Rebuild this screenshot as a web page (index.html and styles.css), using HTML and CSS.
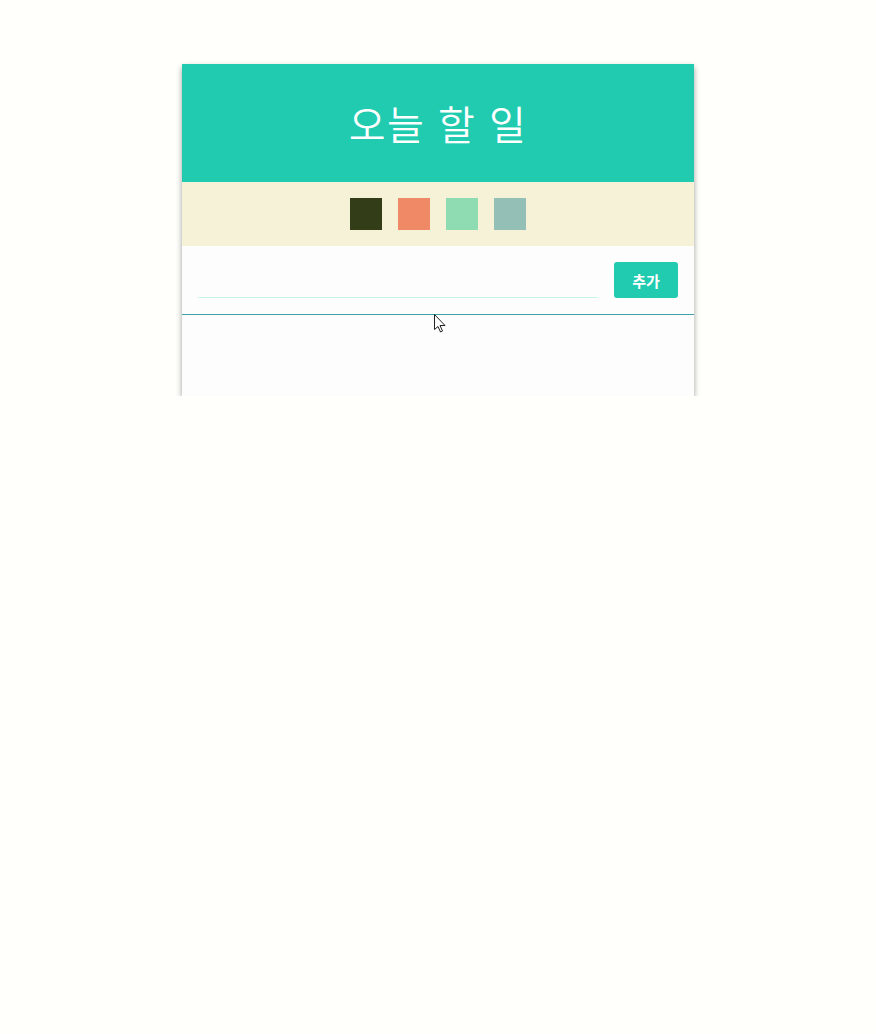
FILE: index.html
```html
<!DOCTYPE html>
<html lang="ko">
<head>
<meta charset="utf-8">
<title>오늘 할 일</title>
<link rel="stylesheet" href="styles.css">
</head>
<body>
<main class="template">
  <div class="title">오늘 할 일</div>
  <section class="palette">
    <div class="color c1"></div>
    <div class="color c2"></div>
    <div class="color c3"></div>
    <div class="color c4"></div>
  </section>
  <section class="form-wrapper">
    <div class="form">
      <input type="text" class="todo-input">
      <div class="create-button">추가</div>
    </div>
  </section>
  <section class="todos-wrapper">
    <svg class="cursor" width="13" height="19" viewBox="0 0 13 19"><path d="M0.5 0.5 L0.5 15.5 L4 12.5 L6.5 18 L8.5 17 L6 11.5 L11 11.5 Z" fill="#fff" stroke="#222" stroke-width="1"/></svg>
  </section>
</main>
</body>
</html>
```
FILE: styles.css
```css
html, body {
  margin: 0;
  padding: 0;
  background: #fffffc;
  font-family: "Noto Sans CJK KR", "Noto Sans", sans-serif;
}
.template {
  width: 512px;
  margin: 64px auto 0;
  background: #fdfdfd;
  box-shadow: 0 3px 6px rgba(0,0,0,0.16), 0 3px 6px rgba(0,0,0,0.23);
}
.title {
  height: 118px;
  background: #20cbb0;
  color: #fff;
  font-size: 40px;
  font-weight: 350;
  line-height: 118px;
  text-align: center;
  letter-spacing: 1.5px;
}
.palette {
  height: 64px;
  background: #f6f2d8;
  display: flex;
  justify-content: center;
  align-items: center;
  gap: 16px;
}
.color {
  width: 32px;
  height: 32px;
}
.c1 { background: #333d17; }
.c2 { background: #f08a66; }
.c3 { background: #90dcb2; }
.c4 { background: #94bfb6; }
.form-wrapper {
  padding: 16px;
  border-bottom: 1px solid #3aa3a6;
  background: #fdfdfd;
}
.form {
  display: flex;
  height: 36px;
}
.todo-input {
  flex: 1;
  min-width: 0;
  font-size: 20px;
  border: none;
  outline: none;
  background: transparent;
  border-bottom: 1px solid #c8f6e4;
  padding: 0;
  margin: 0;
  height: 36px;
  box-sizing: border-box;
}
.create-button {
  margin-left: 16px;
  width: 64px;
  height: 36px;
  box-sizing: border-box;
  background: #20cbb0;
  border-radius: 3px;
  color: #fff;
  font-weight: 700;
  font-size: 15px;
  display: flex;
  align-items: center;
  justify-content: center;
}
.todos-wrapper {
  min-height: 81px;
  position: relative;
}
.cursor {
  position: absolute;
  left: 252px;
  top: -1px;
}
```
